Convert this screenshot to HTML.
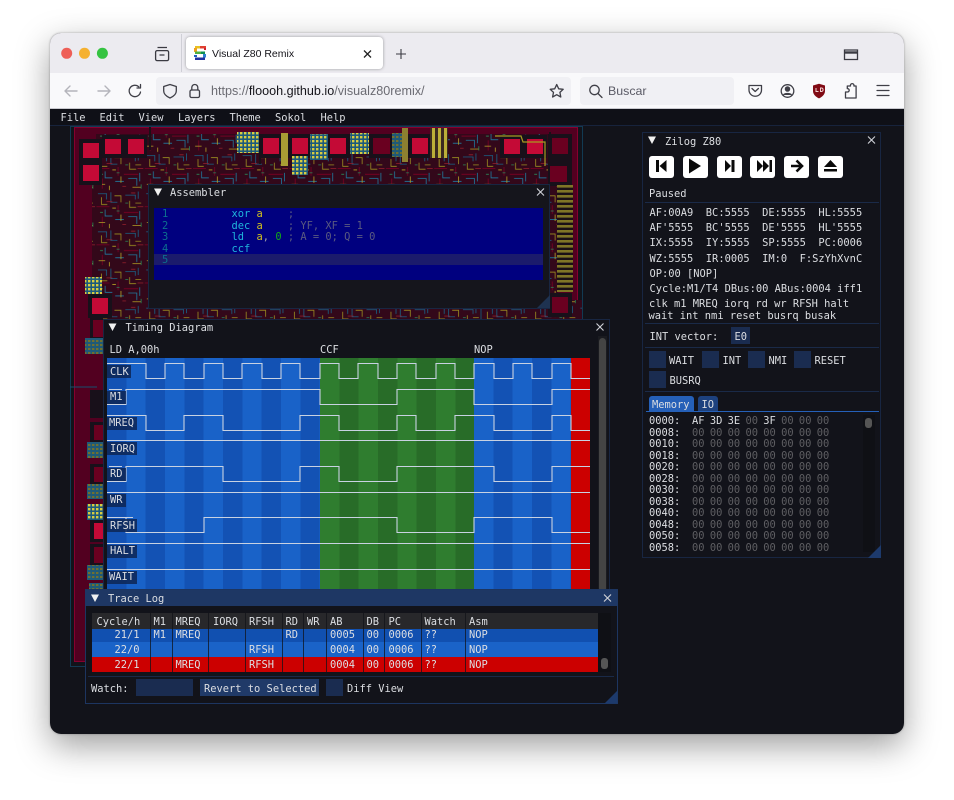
<!DOCTYPE html>
<html lang="en"><head><meta charset="utf-8"><title>Visual Z80 Remix</title>
<style>
html,body{margin:0;padding:0;background:#fff;width:954px;height:800px;overflow:hidden}
#win{position:absolute;left:50px;top:33px;width:854px;height:701px;border-radius:11px;box-shadow:0 12px 34px rgba(0,0,0,.38),0 0 2px rgba(0,0,0,.3)}
.a{position:absolute}
.t{position:absolute;white-space:pre;font:10.4px/12px "DejaVu Sans Mono","Liberation Mono",monospace;color:#dcdee2;margin-top:1px}
.s{position:absolute;white-space:pre;font-family:"Liberation Sans",sans-serif}
.w{position:absolute;background:#12131a;border:1px solid #182642;box-sizing:border-box}
.sep{position:absolute;height:1px;background:#1a2a48}
.b{position:absolute;background:#1a2c50}
.z{color:#5e5e62}
.lb{position:absolute;background:rgba(14,38,84,.85);height:13px}
.cell{position:absolute;top:0;height:100%;width:1px;background:rgba(18,19,26,.75)}
</style></head><body>
<div id="win"></div>

<!-- Browser chrome -->
<div class="a" style="left:50px;top:33px;width:854px;height:701px;border-radius:11px;overflow:hidden;background:#12131a">
<div class="a" style="left:0;top:0;width:854px;height:40px;background:#ecebf0"></div>
<div class="a" style="left:0;top:40px;width:854px;height:35px;background:#f9f9fb"></div>
<div class="a" style="left:0;top:75px;width:854px;height:1px;background:#c9c9cf"></div>
<div class="a" style="left:131px;top:1px;width:1px;height:38px;background:#cfcfd6"></div>
<div class="a" style="left:136px;top:4px;width:197px;height:32px;background:#fff;border-radius:4px;box-shadow:0 0 3px rgba(0,0,0,.35)"></div>
<div class="a" style="left:106px;top:44px;width:415px;height:28px;background:#f0f0f4;border-radius:4px"></div>
<div class="a" style="left:530px;top:44px;width:154px;height:28px;background:#f0f0f4;border-radius:4px"></div>
</div>
<div class="s" style="left:212px;top:47px;font-size:10.5px;line-height:14px;color:#15141a">Visual Z80 Remix</div>
<div class="s" style="left:211px;top:83px;font-size:12.6px;line-height:16px;color:#6b6b72">https://<span style="color:#15141a">floooh.github.io</span>/visualz80remix/</div>
<div class="s" style="left:608px;top:83px;font-size:12.4px;line-height:16px;color:#5b5b66">Buscar</div>

<svg class="a" style="left:0;top:0" width="954" height="120" viewBox="0 0 954 120" fill="none">
<circle cx="66.7" cy="53.3" r="5.5" fill="#ee5f57"/><circle cx="84.5" cy="53.3" r="5.5" fill="#f5b130"/><circle cx="102.4" cy="53.3" r="5.5" fill="#35c341"/>
<g stroke="#3a3a42" stroke-width="1.3">
<rect x="155.6" y="50.6" width="13" height="10" rx="1.5"/><path d="M157.5 47.5h9.5M159.5 55h5"/>
<path d="M364 50.5l7 7M371 50.5l-7 7" stroke="#222"/>
<path d="M396 54h10M401 49v10" stroke-width="1.1"/>
<path d="M845 50h12.5v9.5h-13V50z"/><path d="M844.5 52.5h13" stroke-width="2.4"/>
</g>
<g>
<rect x="195" y="46" width="5" height="2.5" fill="#e8c020"/><rect x="200" y="46" width="6" height="2.5" fill="#e04030"/>
<rect x="194" y="48" width="3" height="4" fill="#f0a020"/><rect x="204" y="48" width="2" height="2" fill="#d02030"/>
<rect x="195" y="51.5" width="6" height="2.5" fill="#50b040"/><rect x="201" y="51.5" width="4" height="2.5" fill="#109050"/>
<rect x="203" y="54" width="3" height="3.5" fill="#3080d0"/><rect x="194" y="55" width="3" height="2" fill="#2060c0"/>
<rect x="195" y="57.5" width="10" height="2.5" fill="#2030a0"/>
</g>
<g stroke="#b4b4bb" stroke-width="1.4" stroke-linecap="round" stroke-linejoin="round">
<path d="M65 91h12M65 91l5-5M65 91l5 5"/><path d="M110 91H98M110 91l-5-5M110 91l-5 5"/>
</g>
<g stroke="#3f3f47" stroke-width="1.3" stroke-linecap="round" stroke-linejoin="round">
<path d="M140.5 92a5.7 5.7 0 1 1-1.7-5.2M140.5 84.5v3.5h-3.5"/>
<path d="M170 84.5l6.3 2v4.5c0 3.5-3 5.5-6.3 7-3.3-1.5-6.3-3.5-6.3-7v-4.5z"/>
<rect x="190" y="90" width="9.5" height="7.5" rx="1.5"/><path d="M191.8 90v-2.5a3 3 0 0 1 6 0V90"/>
<path d="M556.7 84.5l2 4.3 4.5.5-3.3 3.1.9 4.6-4.1-2.3-4.1 2.3.9-4.6-3.3-3.1 4.5-.5z"/>
<circle cx="594.5" cy="90" r="4.7"/><path d="M598 93.5l4 4"/>
<path d="M749 85.5h12.5v4.5a6.2 6.2 0 0 1-12.5 0zM752 88.5l3.2 3 3.2-3"/>
<circle cx="787.5" cy="91" r="6.3"/><circle cx="787.5" cy="89" r="2.1" fill="#3f3f47"/><path d="M783.5 95c1-2 7-2 8 0" fill="#3f3f47"/>
<path d="M845.5 98v-6h2a1.7 1.7 0 1 0 0-3.4h-.2v-2.6h3.2a1.8 1.8 0 1 1 3.4 0h2.2v12z"/>
<path d="M877 85.5h12M877 90.5h12M877 95.5h12" stroke-width="1.2"/>
</g>
<path d="M813 85.5l6-1.8 6 1.8v5.5c0 3.5-3 6-6 7.4-3-1.4-6-3.9-6-7.4z" fill="#800a14"/>
<path d="M816 88v3.5h2.5M820.5 88v3.5h1.2a1.8 1.8 0 0 0 0-3.5z" stroke="#f0d0d0" stroke-width="1" fill="none"/>
</svg>

<!-- Menu bar -->
<div class="a" style="left:50px;top:109px;width:854px;height:17px;background:#0f1017;border-bottom:1px solid #17233c;box-sizing:border-box"></div>
<div class="t" style="left:60.5px;top:110.5px">File</div>
<div class="t" style="left:99.5px;top:110.5px">Edit</div>
<div class="t" style="left:138.5px;top:110.5px">View</div>
<div class="t" style="left:178px;top:110.5px">Layers</div>
<div class="t" style="left:229.5px;top:110.5px">Theme</div>
<div class="t" style="left:275px;top:110.5px">Sokol</div>
<div class="t" style="left:320.5px;top:110.5px">Help</div>

<!-- Chip -->
<svg class="a" style="left:0;top:0" width="954" height="800" viewBox="0 0 954 800" fill="none">
<defs>
<pattern id="n" width="67" height="53" patternUnits="userSpaceOnUse" patternTransform="scale(.72)">
<rect width="67" height="53" fill="#33081a"/>
<g stroke-width="1.1">
<path d="M2 4h12v8M20 2v14h9M40 6h14v6M58 1v10" stroke="#186488"/>
<path d="M7 9v10h8M25 7h9v9M46 14v9h9M62 17h-8" stroke="#9c8f20"/>
<path d="M0 22h18M30 20v12M38 30h20M8 36v14" stroke="#7e0024"/>
<path d="M12 26v9h10M44 36h12v10M26 40h12M60 28v12" stroke="#1f7ca0"/>
<path d="M3 44h9M18 46v6M34 33v9M50 48h12M22 24h5" stroke="#b4a224"/>
<path d="M14 15h8M48 3h6M36 47h5M57 22h8" stroke="#96202c"/>
<path d="M28 28h4M5 30h4M40 17h4M62 44v6" stroke="#2a8a58"/>
</g>
</pattern>
<pattern id="m" width="4" height="4" patternUnits="userSpaceOnUse">
<rect width="4" height="4" fill="#1c5a7c"/><rect width="2.4" height="2.4" fill="#d8cc40"/>
</pattern>
<pattern id="m2" width="4" height="4" patternUnits="userSpaceOnUse">
<rect width="4" height="4" fill="#1f5a78"/><rect width="2.4" height="2" fill="#6f7030"/>
</pattern>
<pattern id="h" width="8" height="5" patternUnits="userSpaceOnUse">
<rect width="8" height="5" fill="#1a1016"/><rect width="8" height="2.6" fill="#7f7526"/>
</pattern>
<pattern id="y" width="6" height="8" patternUnits="userSpaceOnUse">
<rect width="6" height="8" fill="#3a2a20"/><rect width="3" height="8" fill="#bbae38"/>
</pattern>
</defs>
<rect x="70.5" y="126.5" width="512" height="540" stroke="#123a52"/>
<rect x="74.5" y="127.5" width="503" height="534" fill="#520020" stroke="#86002e"/>
<rect x="96" y="134" width="462" height="52" fill="url(#n)"/>
<rect x="92" y="170" width="60" height="130" fill="url(#n)"/>
<rect x="92" y="300" width="490" height="20" fill="url(#n)"/>
<rect x="549" y="184" width="9" height="130" fill="url(#n)"/>
<path d="M150 150V127M260 134v30M550 132V184" stroke="#1a1016" stroke-width="2"/>
<g fill="#18101a">
<rect x="79" y="139" width="23" height="46"/><rect x="102" y="135" width="45" height="23"/><rect x="259" y="134" width="24" height="24"/><rect x="288" y="134" width="24" height="24"/><rect x="326" y="134" width="24" height="24"/><rect x="369" y="134" width="25" height="24"/><rect x="408" y="134" width="24" height="24"/><rect x="500" y="135" width="47" height="23"/><rect x="548" y="134" width="24" height="52"/><rect x="88" y="294" width="24" height="24"/><rect x="548" y="293" width="24" height="24"/>
<rect x="90" y="317" width="13" height="24"/><rect x="90" y="390" width="13" height="28"/><rect x="90" y="422" width="13" height="20"/><rect x="90" y="464" width="13" height="20"/><rect x="90" y="520" width="13" height="22"/><rect x="90" y="544" width="13" height="21"/>
</g>
<g fill="#c40a36">
<rect x="83" y="143" width="16" height="15"/><rect x="105" y="139" width="16" height="15"/><rect x="128" y="139" width="16" height="15"/><rect x="83" y="165" width="16" height="16"/><rect x="263" y="138" width="16" height="16"/><rect x="292" y="138" width="16" height="16"/><rect x="330" y="138" width="16" height="16"/><rect x="412" y="138" width="16" height="16"/><rect x="504" y="139" width="16" height="15"/><rect x="527" y="139" width="16" height="15"/><rect x="92" y="298" width="16" height="16"/><rect x="94" y="523" width="9" height="16"/>
</g>
<g fill="#6a0020">
<rect x="373" y="138" width="17" height="16"/><rect x="552" y="138" width="16" height="16"/><rect x="550" y="166" width="17" height="16"/><rect x="552" y="297" width="16" height="16"/><rect x="93" y="320" width="10" height="17"/><rect x="94" y="425" width="9" height="15"/><rect x="94" y="467" width="9" height="15"/><rect x="94" y="547" width="9" height="16"/>
</g>
<rect x="237" y="132" width="22" height="21" fill="url(#m)"/><rect x="310" y="134" width="18" height="26" fill="url(#m)"/><rect x="292" y="156" width="16" height="19" fill="url(#m)"/><rect x="350" y="133" width="19" height="21" fill="url(#m)"/><rect x="85" y="277" width="17" height="17" fill="url(#m)"/><rect x="87" y="504" width="16" height="16" fill="url(#m)"/>
<rect x="85" y="338" width="18" height="16" fill="url(#m2)"/><rect x="87" y="442" width="16" height="16" fill="url(#m2)"/><rect x="87" y="484" width="16" height="15" fill="url(#m2)"/><rect x="87" y="565" width="16" height="15" fill="url(#m2)"/><rect x="89" y="583" width="14" height="8" fill="url(#m2)"/><rect x="392" y="133" width="10" height="24" fill="url(#m2)"/>
<rect x="281" y="133" width="7" height="33" fill="#a89c34"/><rect x="402" y="128" width="6" height="34" fill="#8d8030"/><rect x="430" y="128" width="18" height="30" fill="url(#y)"/>
<rect x="557" y="185" width="16" height="107" fill="url(#h)"/>
<path d="M70 387h27M481 300v20" stroke="#15506e"/>
<path d="M495 136h26l2 6h22v24" stroke="#a89a20" stroke-width="1.2"/>
</svg>

<!-- Assembler -->
<div class="w" style="left:148px;top:184px;width:402px;height:125px;background:#15151c"></div>
<div class="t" style="left:170px;top:186px">Assembler</div>
<div class="a" style="left:154px;top:208px;width:389px;height:72px;background:#00007f"></div>
<div class="a" style="left:154px;top:254px;width:389px;height:11px;background:#1b1b6c"></div>
<div class="t" style="left:162px;top:208px;color:#0d6f8f;line-height:11.5px">1
2
3
4
5</div>
<div class="t" style="left:231.5px;top:208px;line-height:11.5px;color:#1fb6dc">xor <span style="color:#d2c21c">a</span>    <span style="color:#5a5a80">;</span>
dec <span style="color:#d2c21c">a</span>    <span style="color:#5a5a80">; YF, XF = 1</span>
ld  <span style="color:#d2c21c">a</span><span style="color:#9a9aa8">,</span> <span style="color:#12a818">0</span> <span style="color:#5a5a80">; A = 0; Q = 0</span>
ccf</div>

<!-- Timing Diagram -->
<div class="w" style="left:103px;top:319px;width:507px;height:275px"></div>
<div class="t" style="left:125.5px;top:321px">Timing Diagram</div>
<div class="t" style="left:109.5px;top:343px">LD A,00h</div>
<div class="t" style="left:320px;top:343px">CCF</div>
<div class="t" style="left:474px;top:343px">NOP</div>
<div class="a" style="left:107px;top:358px;width:213px;height:232px;background:repeating-linear-gradient(90deg,#1352b4 0 19.33px,#1962c8 19.33px 38.66px)"></div>
<div class="a" style="left:320px;top:358px;width:154px;height:232px;background:repeating-linear-gradient(90deg,#2f7d2f 0 19.33px,#286c28 19.33px 38.66px)"></div>
<div class="a" style="left:474px;top:358px;width:97px;height:232px;background:repeating-linear-gradient(90deg,#1962c8 0 19.33px,#1352b4 19.33px 38.66px)"></div>
<div class="a" style="left:571px;top:358px;width:19px;height:232px;background:#cc0000"></div>
<div class="a" style="left:598px;top:336px;width:9px;height:256px;background:#1a1b20"></div>
<div class="a" style="left:599px;top:338px;width:7px;height:254px;background:#444;border-radius:4px"></div>

<svg class="a" style="left:0;top:0" width="954" height="800" viewBox="0 0 954 800" fill="none">
<g stroke="#c8d2e2" stroke-width="1.1">
<path d="M107 363.5H146V378.5H165V363.5H184V378.5H204V363.5H223V378.5H242V363.5H262V378.5H281V363.5H300V378.5H320V363.5H339V378.5H358V363.5H378V378.5H397V363.5H416V378.5H436V363.5H455V378.5H474V363.5H494V378.5H513V363.5H532V378.5H552V363.5H571V378.5H590"/>
<path d="M107 404.5H126V389.5H320V404.5H397V389.5H474V404.5H552V389.5H590"/>
<path d="M107 415.5H146V430.5H184V415.5H223V430.5H300V415.5H339V430.5H397V415.5H416V430.5H455V415.5H494V430.5H552V415.5H571V430.5H590"/>
<path d="M107 440.5H590"/>
<path d="M107 481.5H126V466.5H223V481.5H300V466.5H339V481.5H397V466.5H494V481.5H552V466.5H590"/>
<path d="M107 492.5H590"/>
<path d="M107 517.5H126V532.5H204V517.5H397V532.5H474V517.5H552V532.5H590"/>
<path d="M107 543.5H590"/>
<path d="M107 569.5H590"/>
</g>
</svg>
<div class="lb" style="left:107px;top:365px;width:24px"></div>
<div class="lb" style="left:107px;top:391px;width:19px"></div>
<div class="lb" style="left:107px;top:417px;width:30px"></div>
<div class="lb" style="left:107px;top:442px;width:30px"></div>
<div class="lb" style="left:107px;top:468px;width:19px"></div>
<div class="lb" style="left:107px;top:494px;width:19px"></div>
<div class="lb" style="left:107px;top:519px;width:30px"></div>
<div class="lb" style="left:107px;top:545px;width:30px"></div>
<div class="lb" style="left:107px;top:571px;width:30px"></div>
<div class="t" style="left:110px;top:364.5px">CLK</div>
<div class="t" style="left:110px;top:390px">M1</div>
<div class="t" style="left:109px;top:416px">MREQ</div>
<div class="t" style="left:110px;top:441.5px">IORQ</div>
<div class="t" style="left:110px;top:467px">RD</div>
<div class="t" style="left:110px;top:493px">WR</div>
<div class="t" style="left:110px;top:518.5px">RFSH</div>
<div class="t" style="left:110px;top:544px">HALT</div>
<div class="t" style="left:109px;top:570px">WAIT</div>

<!-- Zilog Z80 -->
<div class="w" style="left:642px;top:132px;width:239px;height:426px"></div>
<div class="t" style="left:665px;top:134.5px">Zilog Z80</div>
<div class="a" style="left:649px;top:156px;width:25px;height:22px;background:#fff;border-radius:3px"></div>
<div class="a" style="left:683px;top:156px;width:25px;height:22px;background:#fff;border-radius:3px"></div>
<div class="a" style="left:717px;top:156px;width:25px;height:22px;background:#fff;border-radius:3px"></div>
<div class="a" style="left:750px;top:156px;width:25px;height:22px;background:#fff;border-radius:3px"></div>
<div class="a" style="left:784px;top:156px;width:25px;height:22px;background:#fff;border-radius:3px"></div>
<div class="a" style="left:818px;top:156px;width:25px;height:22px;background:#fff;border-radius:3px"></div>
<div class="t" style="left:649px;top:187px">Paused</div>
<div class="sep" style="left:645px;top:202px;width:234px"></div>
<div class="t" style="left:649.5px;top:206px">AF:00A9  BC:5555  DE:5555  HL:5555</div>
<div class="t" style="left:649.5px;top:221px">AF'5555  BC'5555  DE'5555  HL'5555</div>
<div class="t" style="left:649.5px;top:236px">IX:5555  IY:5555  SP:5555  PC:0006</div>
<div class="t" style="left:649.5px;top:251.5px">WZ:5555  IR:0005  IM:0  F:SzYhXvnC</div>
<div class="t" style="left:649.5px;top:267px">OP:00 [NOP]</div>
<div class="t" style="left:649.5px;top:282px">Cycle:M1/T4 DBus:00 ABus:0004 iff1</div>
<div class="t" style="left:649px;top:297px">clk m1 MREQ iorq rd wr RFSH halt</div>
<div class="t" style="left:648.5px;top:308.5px">wait int nmi reset busrq busak</div>
<div class="sep" style="left:645px;top:323px;width:234px"></div>
<div class="t" style="left:649.5px;top:330px">INT vector:</div>
<div class="b" style="left:731px;top:327px;width:19px;height:17px"></div>
<div class="t" style="left:734.5px;top:330px">E0</div>
<div class="sep" style="left:645px;top:347px;width:234px"></div>
<div class="b" style="left:649px;top:351px;width:17px;height:17px"></div>
<div class="b" style="left:701.5px;top:351px;width:17px;height:17px"></div>
<div class="b" style="left:748px;top:351px;width:17px;height:17px"></div>
<div class="b" style="left:794px;top:351px;width:17px;height:17px"></div>
<div class="b" style="left:649px;top:371px;width:17px;height:17px"></div>
<div class="t" style="left:669px;top:353.5px">WAIT</div>
<div class="t" style="left:722.5px;top:353.5px">INT</div>
<div class="t" style="left:768.5px;top:353.5px">NMI</div>
<div class="t" style="left:814.5px;top:353.5px">RESET</div>
<div class="t" style="left:669.5px;top:374px">BUSRQ</div>
<div class="sep" style="left:645px;top:391px;width:234px"></div>
<div class="a" style="left:649px;top:396px;width:45px;height:15px;background:#2560b8;border-radius:3px 3px 0 0"></div>
<div class="a" style="left:698px;top:396px;width:20px;height:15px;background:#1d417e;border-radius:3px 3px 0 0"></div>
<div class="a" style="left:646px;top:411px;width:233px;height:1px;background:#2560b8"></div>
<div class="t" style="left:652px;top:397.5px">Memory</div>
<div class="t" style="left:701.5px;top:397.5px">IO</div>
<div class="a" style="left:863px;top:415px;width:12px;height:137px;background:#0f1015"></div>
<div class="a" style="left:865px;top:418px;width:7px;height:10px;background:#555;border-radius:3px"></div>
<div class="a" style="left:649px;top:415px;width:210px;height:136px;overflow:hidden">
<div class="t" style="left:0;top:0;line-height:11.55px">0000:
0008:
0010:
0018:
0020:
0028:
0030:
0038:
0040:
0048:
0050:
0058:</div>
<div class="t" style="left:43px;top:0;line-height:11.55px;word-spacing:-.95px"><span>AF 3D 3E</span><span class="z"> 00</span> 3F<span class="z"> 00 00 00</span>
<span class="z">00 00 00 00 00 00 00 00</span>
<span class="z">00 00 00 00 00 00 00 00</span>
<span class="z">00 00 00 00 00 00 00 00</span>
<span class="z">00 00 00 00 00 00 00 00</span>
<span class="z">00 00 00 00 00 00 00 00</span>
<span class="z">00 00 00 00 00 00 00 00</span>
<span class="z">00 00 00 00 00 00 00 00</span>
<span class="z">00 00 00 00 00 00 00 00</span>
<span class="z">00 00 00 00 00 00 00 00</span>
<span class="z">00 00 00 00 00 00 00 00</span>
<span class="z">00 00 00 00 00 00 00 00</span></div>
</div>

<!-- Trace Log -->
<div class="w" style="left:85px;top:589px;width:533px;height:115px;border-color:#1d3560"></div>
<div class="a" style="left:85px;top:590px;width:533px;height:16px;background:#1e3764"></div>
<div class="t" style="left:108px;top:592px">Trace Log</div>
<div class="a" style="left:92px;top:613px;width:506px;height:16px;background:#28282b"></div>
<div class="a" style="left:92px;top:629px;width:506px;height:13px;background:#1150b0"></div>
<div class="a" style="left:92px;top:642px;width:506px;height:15px;background:#1a63c8"></div>
<div class="a" style="left:92px;top:657px;width:506px;height:15px;background:#cc0000"></div>
<div class="a" style="left:598px;top:613px;width:13px;height:59px;background:#0f1015"></div>
<div class="a" style="left:601px;top:658px;width:7px;height:11px;background:#555;border-radius:3px"></div>
<div class="a" style="left:92px;top:613px;width:506px;height:59px">
<div class="cell" style="left:58px"></div><div class="cell" style="left:79.5px"></div><div class="cell" style="left:116px"></div><div class="cell" style="left:153px"></div><div class="cell" style="left:189.5px"></div><div class="cell" style="left:211px"></div><div class="cell" style="left:234px"></div><div class="cell" style="left:270.5px"></div><div class="cell" style="left:292px"></div><div class="cell" style="left:328.5px"></div><div class="cell" style="left:373px"></div>
</div>
<div class="t" style="left:96.5px;top:615px">Cycle/h</div><div class="t" style="left:153.5px;top:615px">M1</div><div class="t" style="left:175.5px;top:615px">MREQ</div><div class="t" style="left:213px;top:615px">IORQ</div><div class="t" style="left:249px;top:615px">RFSH</div><div class="t" style="left:285.5px;top:615px">RD</div><div class="t" style="left:307px;top:615px">WR</div><div class="t" style="left:330px;top:615px">AB</div><div class="t" style="left:366.5px;top:615px">DB</div><div class="t" style="left:388.5px;top:615px">PC</div><div class="t" style="left:424.5px;top:615px">Watch</div><div class="t" style="left:469px;top:615px">Asm</div>
<div class="t" style="left:114.5px;top:628px">21/1</div><div class="t" style="left:153.5px;top:628px">M1</div><div class="t" style="left:175.5px;top:628px">MREQ</div><div class="t" style="left:285.5px;top:628px">RD</div><div class="t" style="left:330px;top:628px">0005</div><div class="t" style="left:366.5px;top:628px">00</div><div class="t" style="left:388.5px;top:628px">0006</div><div class="t" style="left:424.5px;top:628px">??</div><div class="t" style="left:469px;top:628px">NOP</div>
<div class="t" style="left:114.5px;top:643px">22/0</div><div class="t" style="left:249px;top:643px">RFSH</div><div class="t" style="left:330px;top:643px">0004</div><div class="t" style="left:366.5px;top:643px">00</div><div class="t" style="left:388.5px;top:643px">0006</div><div class="t" style="left:424.5px;top:643px">??</div><div class="t" style="left:469px;top:643px">NOP</div>
<div class="t" style="left:114.5px;top:658px">22/1</div><div class="t" style="left:175.5px;top:658px">MREQ</div><div class="t" style="left:249px;top:658px">RFSH</div><div class="t" style="left:330px;top:658px">0004</div><div class="t" style="left:366.5px;top:658px">00</div><div class="t" style="left:388.5px;top:658px">0006</div><div class="t" style="left:424.5px;top:658px">??</div><div class="t" style="left:469px;top:658px">NOP</div>
<div class="sep" style="left:88px;top:676px;width:526px"></div>
<div class="t" style="left:91px;top:682px">Watch:</div>
<div class="b" style="left:136px;top:679px;width:57px;height:17px"></div>
<div class="a" style="left:200px;top:679px;width:119px;height:17px;background:#203a68"></div>
<div class="t" style="left:204px;top:682px">Revert to Selected</div>
<div class="b" style="left:326px;top:679px;width:17px;height:17px"></div>
<div class="t" style="left:347px;top:682px">Diff View</div>

<!-- Window decorations -->
<svg class="a" style="left:0;top:0" width="954" height="800" viewBox="0 0 954 800" fill="none">
<g fill="#f0f0f0">
<path d="M154 188.5h8l-4 7.5z"/><path d="M108.5 323.5h8l-4 7.5z"/><path d="M91 594.5h8l-4 7.5z"/><path d="M648 136.5h8l-4 7.5z"/>
</g>
<g stroke="#d0d2d8" stroke-width="1.1">
<path d="M537 188.5l7 7M544 188.5l-7 7"/><path d="M596.5 323.5l7 7M603.5 323.5l-7 7"/><path d="M604 594.5l7 7M611 594.5l-7 7"/><path d="M868 136.5l7 7M875 136.5l-7 7"/>
</g>
<g fill="#1e3250">
<path d="M550 295v13h-13z"/><path d="M881 545v13h-13z" fill="#1d3a6c"/><path d="M617.5 690.5v13h-13z" fill="#1d3a6c"/>
</g>
<g fill="#0a0a0a">
<rect x="656" y="160" width="3" height="12"/><path d="M666.5 160v12l-7-6z"/>
<path d="M689 158.5l12 7.5-12 7.5z"/>
<path d="M725 160l6 6-6 6z"/><rect x="731.5" y="160" width="3" height="12"/>
<path d="M757 160l6 6-6 6z"/><path d="M763 160l6 6-6 6z"/><rect x="769.5" y="160" width="2.5" height="12"/>
<path d="M791 166h10.5M796.5 160.5l5.5 5.5-5.5 5.5" stroke="#0a0a0a" stroke-width="2.6" fill="none"/>
<path d="M830.5 160l6.5 7h-13z"/><rect x="824" y="169" width="13" height="2.5"/>
</g>
<g fill="#c8d2e2">
<rect x="109" y="389" width="13" height="1"/><rect x="109" y="415" width="24" height="1"/><rect x="109" y="440" width="24" height="1"/><rect x="109" y="466" width="13" height="1"/><rect x="109" y="492" width="13" height="1"/><rect x="109" y="517" width="24" height="1"/><rect x="109" y="543" width="24" height="1"/><rect x="109" y="569" width="24" height="1"/>
</g>
</svg>
</body></html>
